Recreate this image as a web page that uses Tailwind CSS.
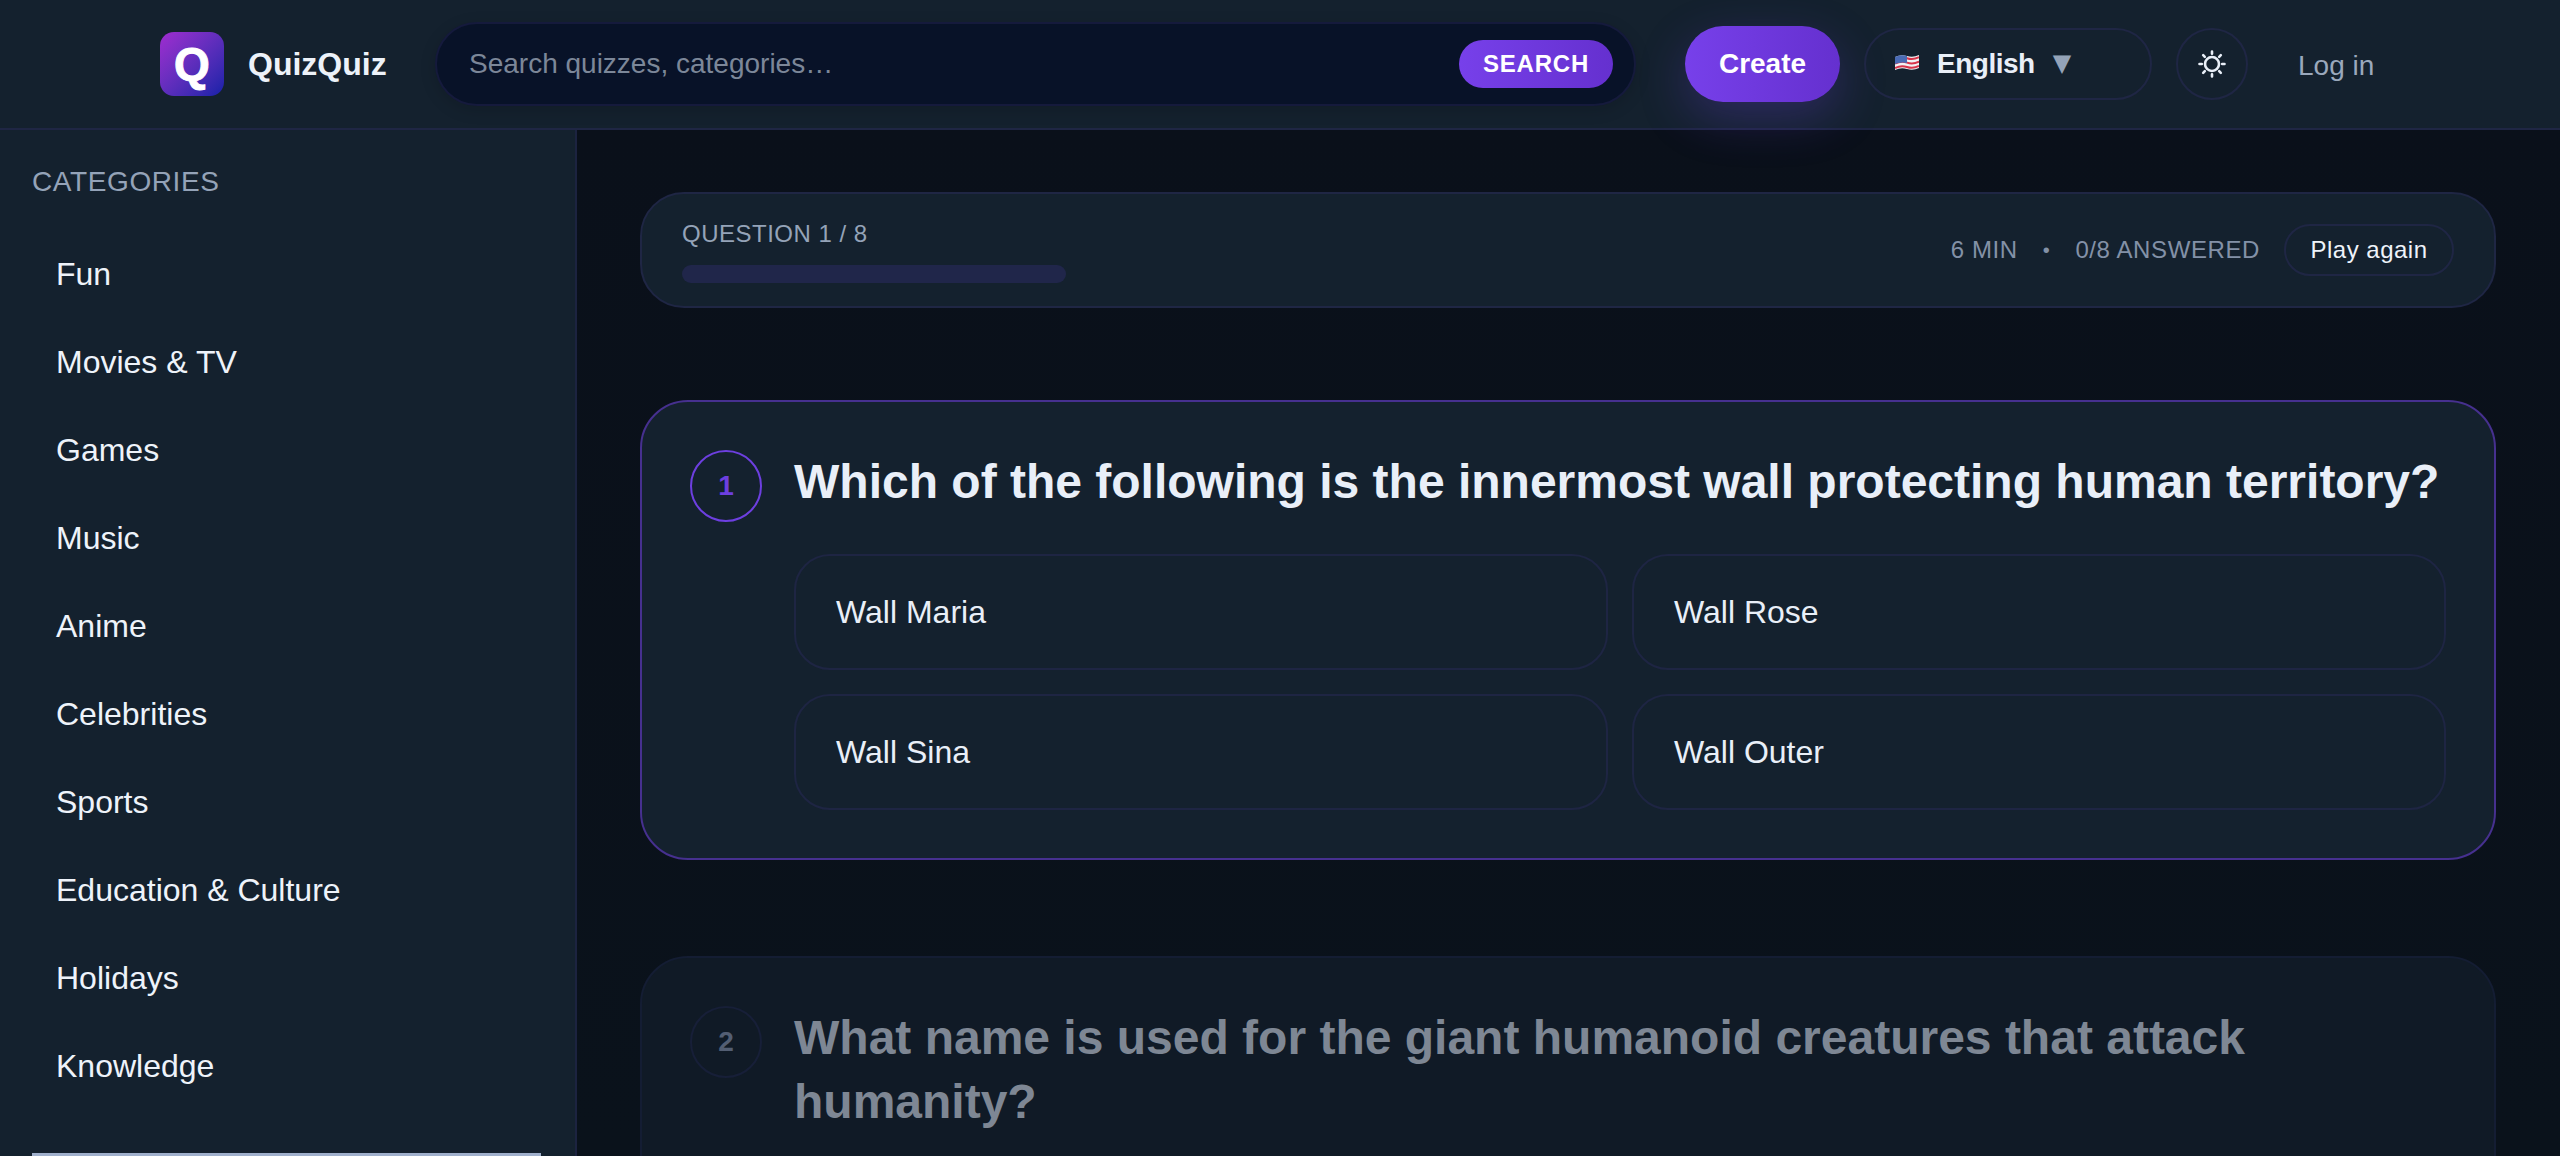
<!DOCTYPE html>
<html lang="en">
<head>
<meta charset="utf-8">
<title>QuizQuiz</title>
<script src="https://cdn.jsdelivr.net/npm/@tailwindcss/browser@4"></script>
</head>
<body class="m-0 bg-[#0a111a]">
<div class="flex h-[1156px] w-[2560px] flex-col overflow-hidden bg-[#0a111a] font-['Liberation_Sans',Arial,sans-serif] text-[#e9eff8]">
  <header class="relative z-10 flex h-[130px] shrink-0 items-center border-b-2 border-[#1f2644] bg-[#14212e] pl-[160px]">
    <div class="flex h-16 w-16 items-center justify-center rounded-[14px] bg-gradient-to-br from-[#a02bd0] to-[#1420a8] text-[46px] leading-none font-bold text-white [-webkit-text-stroke:1px_white]">Q</div>
    <div class="ml-6 w-[187px] text-[32px] leading-none font-bold text-[#edf2f9]">QuizQuiz</div>
    <div class="flex h-[84px] w-[1201px] items-center rounded-full border-2 border-[#151a3c] bg-[#081228] pr-[21px] pl-[32px] shadow-[0_4px_16px_rgba(0,0,0,0.15)]">
      <span class="flex-1 text-[28px] text-[#7c8799]">Search quizzes, categories…</span>
      <span class="flex h-12 w-[154px] items-center justify-center rounded-full bg-gradient-to-r from-[#7740ea] to-[#6530cf] text-[24px] font-bold tracking-[0.8px] text-white">SEARCH</span>
    </div>
    <div class="ml-[49px] flex h-[76px] w-[155px] items-center justify-center rounded-full bg-gradient-to-r from-[#7740ea] to-[#6530cf] text-[28px] font-bold text-white shadow-[0_16px_48px_rgba(109,63,224,0.28)]">Create</div>
    <div class="ml-6 flex h-[72px] w-[288px] items-center rounded-full border-2 border-[#1f2644] pl-[29px]">
      <svg class="mb-[2px] shrink-0" width="24" height="18" viewBox="0 0 24 18" aria-hidden="true">
        <path d="M0 3 Q6 0 12 2 T24 1 V14 Q18 17 12 15 T0 16 Z" fill="#f2f2f4"/>
        <path d="M0 5.2 Q6 2.2 12 4.2 T24 3.2 M0 9.6 Q6 6.6 12 8.6 T24 7.6 M0 14 Q6 11 12 13 T24 12" fill="none" stroke="#d8344a" stroke-width="2"/>
        <path d="M0 3 Q6 0 12 2 V9 Q6 7.5 0 10 Z" fill="#4a6bb5"/>
      </svg>
      <span class="ml-[18px] text-[28px] font-bold tracking-[-0.5px] text-[#e9eff8]">English</span>
      <span class="mb-[3px] ml-[18px] font-['DejaVu_Sans',sans-serif] text-[24px] leading-none text-[#94a3b8]">▼</span>
    </div>
    <div class="ml-6 flex h-[72px] w-[72px] items-center justify-center rounded-full border-2 border-[#1f2644]">
      <svg class="mb-[1px]" width="28" height="28" viewBox="0 0 28 28" fill="none" stroke="#e9eff8" stroke-width="2.6" stroke-linecap="round" aria-hidden="true">
        <circle cx="14" cy="14" r="7"/>
        <path d="M14 1.5V3.8M14 24.2V26.5M1.5 14H3.8M24.2 14H26.5M5.2 5.2L6.8 6.8M21.2 21.2L22.8 22.8M22.8 5.2L21.2 6.8M6.8 21.2L5.2 22.8"/>
      </svg>
    </div>
    <div class="mt-[3px] ml-[50px] text-[28px] text-[#9aa8bc]">Log in</div>
  </header>

  <div class="flex min-h-0 flex-1">
    <aside class="relative w-[577px] shrink-0 border-r-2 border-[#1c2340] bg-[#14212e] pl-8">
      <div class="pt-[36px] text-[28px] leading-[32px] tracking-[0.6px] text-[#94a3b8]">CATEGORIES</div>
      <nav class="mt-[32px] flex flex-col pl-6 text-[32px] text-[#eef3fa]">
        <div class="flex h-[88px] items-center">Fun</div>
        <div class="flex h-[88px] items-center">Movies &amp; TV</div>
        <div class="flex h-[88px] items-center">Games</div>
        <div class="flex h-[88px] items-center">Music</div>
        <div class="flex h-[88px] items-center">Anime</div>
        <div class="flex h-[88px] items-center">Celebrities</div>
        <div class="flex h-[88px] items-center">Sports</div>
        <div class="flex h-[88px] items-center">Education &amp; Culture</div>
        <div class="flex h-[88px] items-center">Holidays</div>
        <div class="flex h-[88px] items-center">Knowledge</div>
      </nav>
      <div class="mt-[43px] h-[3px] w-[509px] bg-[#a0b0cc]"></div>
    </aside>

    <main class="min-w-0 flex-1 bg-gradient-to-b from-[#0a101a] to-[#0a121b] pt-[62px] pr-[64px] pl-[63px]">
      <section class="flex h-[116px] items-center justify-between rounded-[44px] border-2 border-[#1f2644] bg-[#14212e] pr-[40px] pl-[40px]">
        <div class="w-[384px]">
          <div class="mt-[-3px] text-[24px] leading-[28px] tracking-[0.5px] text-[#94a3b8]">QUESTION 1 / 8</div>
          <div class="mt-[17px] mb-[-6px] h-[18px] rounded-full bg-[#20264a]"></div>
        </div>
        <div class="flex items-center text-[24px] tracking-[0.6px] text-[#8391a7]">
          <span>6 MIN</span>
          <span class="mr-[25px] ml-[25px] text-[20px]">•</span>
          <span>0/8 ANSWERED</span>
          <span class="ml-[24px] flex h-[52px] w-[170px] items-center justify-center rounded-full border-2 border-[#1f2644] text-[24px] tracking-[0.5px] text-[#eef3fa]">Play again</span>
        </div>
      </section>

      <section class="mt-[92px] flex h-[460px] gap-[32px] rounded-[48px] border-2 border-[#46308f] bg-[#14212e] pt-[48px] pr-[48px] pl-[48px]">
        <div class="flex h-[72px] w-[72px] shrink-0 items-center justify-center rounded-full border-2 border-[#6d3fe0] text-[28px] font-bold text-[#6d3fe0]">1</div>
        <div class="min-w-0 flex-1">
          <h2 class="text-[48px] leading-[64px] font-bold whitespace-nowrap text-[#e9eff8]">Which of the following is the innermost wall protecting human territory?</h2>
          <div class="mt-[40px] grid grid-cols-2 gap-[24px] text-[32px] text-[#e9eff8]">
            <div class="flex h-[116px] items-center rounded-[36px] border-2 border-[#1e2543] pl-[40px]">Wall Maria</div>
            <div class="flex h-[116px] items-center rounded-[36px] border-2 border-[#1e2543] pl-[40px]">Wall Rose</div>
            <div class="flex h-[116px] items-center rounded-[36px] border-2 border-[#1e2543] pl-[40px]">Wall Sina</div>
            <div class="flex h-[116px] items-center rounded-[36px] border-2 border-[#1e2543] pl-[40px]">Wall Outer</div>
          </div>
        </div>
      </section>

      <section class="mt-[96px] flex h-[460px] gap-[32px] rounded-[48px] border-2 border-[#141d33] bg-[#101a26] pt-[48px] pr-[48px] pl-[48px]">
        <div class="flex h-[72px] w-[72px] shrink-0 items-center justify-center rounded-full border-2 border-[#171f38] text-[28px] font-bold text-[#535e73]">2</div>
        <h2 class="min-w-0 flex-1 text-[48px] leading-[64px] font-bold text-[#7e8794]">What name is used for the giant humanoid creatures that attack humanity?</h2>
      </section>
    </main>
  </div>
</div>
</body>
</html>
